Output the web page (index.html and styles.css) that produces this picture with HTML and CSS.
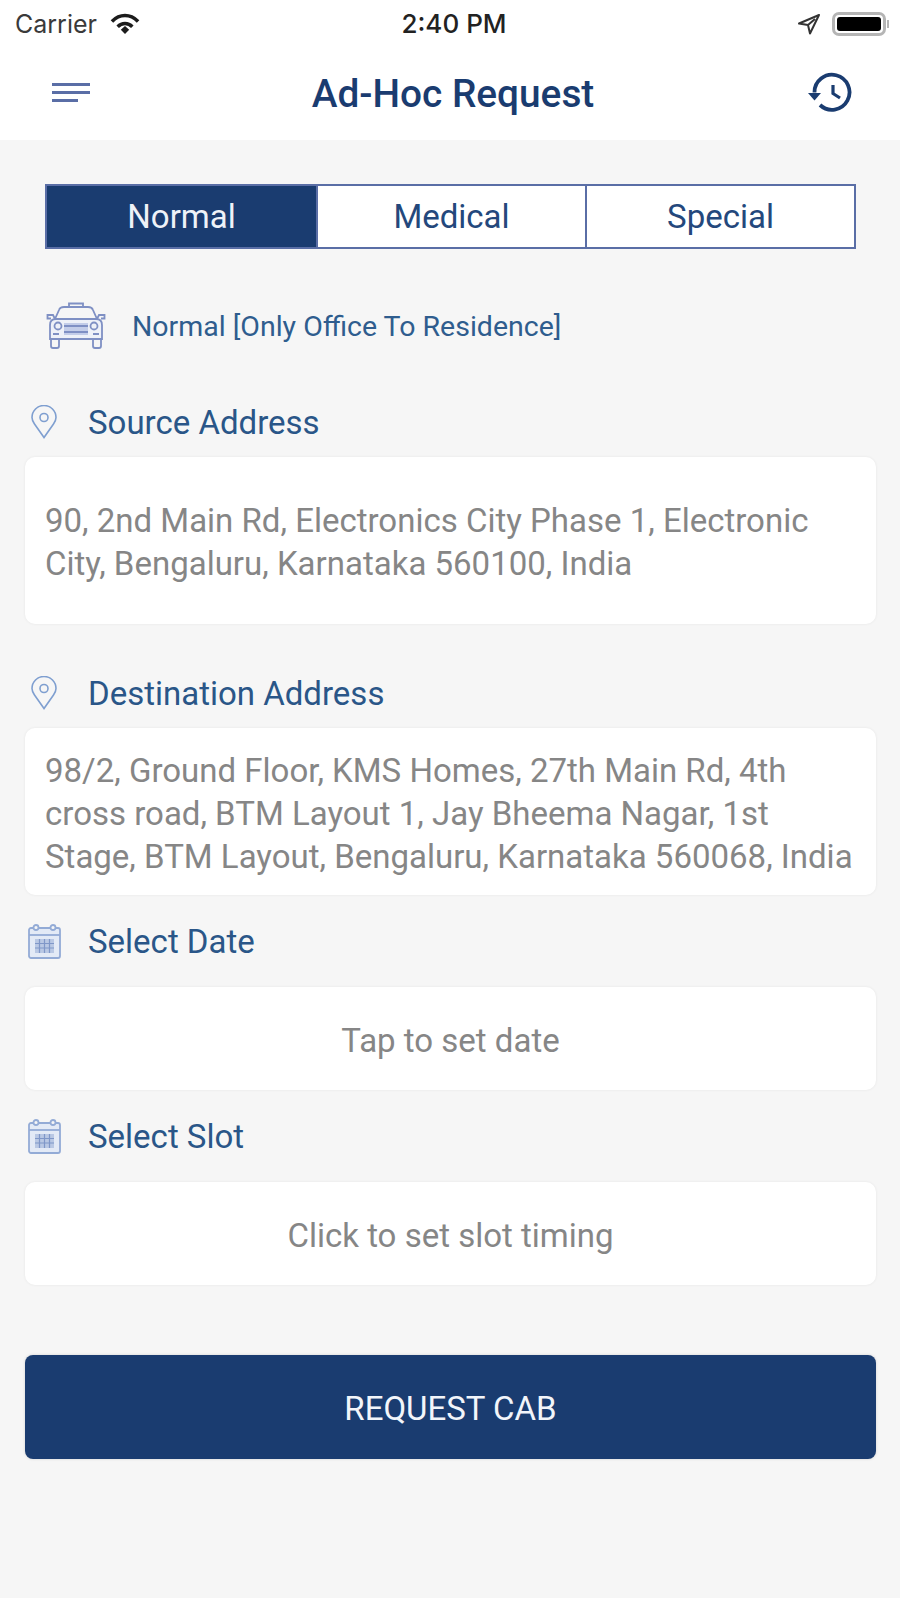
FILE: index.html
```html
<!DOCTYPE html>
<html lang="en">
<head>
<meta charset="utf-8">
<title>Ad-Hoc Request</title>
<link rel="stylesheet" href="styles.css">
</head>
<body>
<div class="app">
  <header class="top">
    <div class="status">
      <div class="status-left">
        <span>Carrier</span>
        <svg class="wifi" viewBox="0 0 30 22" width="32" height="23"><path d="M2.500 9 C10 1.500 20 1.500 27.500 9" fill="none" stroke="#1c1c1c" stroke-width="3.400"/><path d="M8 14 C12 10 18 10 22 14" fill="none" stroke="#1c1c1c" stroke-width="3.400"/><path d="M11 17 L15 13.500 L19 17 L15 21 Z" fill="#1c1c1c"/></svg>
      </div>
      <div class="status-time">2:40 PM</div>
      <div class="status-right">
        <svg viewBox="0 0 24 22" width="24" height="22"><path d="M22 2 L2 10.500 L11 12 L13 20.500 Z M18 6 L11 12" fill="none" stroke="#333" stroke-width="2" stroke-linejoin="round"/></svg>
        <div class="battery"><div class="battery-fill"></div></div>
        <div class="battery-tip"></div>
      </div>
    </div>
    <div class="nav">
      <svg class="menu" viewBox="0 0 38 22" width="38" height="22"><path d="M0 2.500H38M0 10.500H38M0 18.500H26" stroke="#5a6ea6" stroke-width="2.800" fill="none"/></svg>
      <h1 class="title">Ad-Hoc Request</h1>
      <svg class="history" viewBox="0 0 46 42" width="46" height="42"><path d="M6.500 20.500 A17.500 17.500 0 1 1 12 33" fill="none" stroke="#1a3c70" stroke-width="3.800"/><path d="M0 21 L13 21 L6.500 28.500 Z" fill="#1a3c70"/><path d="M25 13 V21.500 L32 26" fill="none" stroke="#1a3c70" stroke-width="3.200"/></svg>
    </div>
  </header>
  <main class="content">
    <div class="tabs">
      <div class="tab active">Normal</div>
      <div class="tab">Medical</div>
      <div class="tab">Special</div>
    </div>
    <div class="mode">
      <svg class="car" viewBox="0 0 60 48" width="60" height="48" fill="none" stroke="#7f90c4" stroke-width="1.800"><path d="M23 6V2.500H37V6"/><path d="M9 18 L13 9 Q14 6 18 6H42Q46 6 47 9L51 18"/><path d="M5 17.500H1.500V14H7L9 18M55 17.500H58.500V14H53L51 18"/><path d="M4 24 Q4 18 10 18H50Q56 18 56 24V38H4Z" fill="#eef1f8"/><path d="M5 38V45Q5 47 7 47H11Q13 47 13 45V38M47 38V45Q47 47 49 47H53Q55 47 55 45V38"/><circle cx="12" cy="25" r="3.500"/><circle cx="48" cy="25" r="3.500"/><rect x="18" y="22" width="24" height="12" fill="#c3cde9" stroke="none"/><path d="M18 25H42M18 31H42M7 33H13M47 33H53" stroke-width="2"/></svg>
      <span class="mode-text">Normal [Only Office To Residence]</span>
    </div>
    <section class="field field-source">
      <div class="label">
        <svg class="pin" viewBox="0 0 26 34" width="26" height="34" fill="none" stroke="#7f9fd0" stroke-width="1.600"><path d="M13 32.500 L3.500 19 Q1 15.500 1 12.500 A12 12 0 0 1 25 12.500 Q25 15.500 22.500 19 Z"/><circle cx="13" cy="12.500" r="4"/></svg>
        <span>Source Address</span>
      </div>
      <div class="card card-address">90, 2nd Main Rd, Electronics City Phase 1, Electronic City, Bengaluru, Karnataka 560100, India</div>
    </section>
    <section class="field field-dest">
      <div class="label">
        <svg class="pin" viewBox="0 0 26 34" width="26" height="34" fill="none" stroke="#7f9fd0" stroke-width="1.600"><path d="M13 32.500 L3.500 19 Q1 15.500 1 12.500 A12 12 0 0 1 25 12.500 Q25 15.500 22.500 19 Z"/><circle cx="13" cy="12.500" r="4"/></svg>
        <span>Destination Address</span>
      </div>
      <div class="card card-address">98/2, Ground Floor, KMS Homes, 27th Main Rd, 4th cross road, BTM Layout 1, Jay Bheema Nagar, 1st Stage, BTM Layout, Bengaluru, Karnataka 560068, India</div>
    </section>
    <section class="field field-date">
      <div class="label">
        <svg class="cal" viewBox="0 0 33 35" width="33" height="35" fill="none" stroke="#93abd6" stroke-width="1.800"><rect x="1" y="4" width="31" height="30" rx="2" fill="#e3eaf6"/><path d="M1 11H32"/><circle cx="8" cy="3.500" r="2.500" fill="#f6f6f6"/><circle cx="25" cy="3.500" r="2.500" fill="#f6f6f6"/><rect x="7" y="15" width="19" height="14" fill="#b9c8e4" stroke="none"/><path d="M7 19.500H26M7 24H26M11.500 15V29M16.500 15V29M21.500 15V29" stroke="#7f97c8" stroke-width="1.200"/></svg>
        <span>Select Date</span>
      </div>
      <div class="card card-action">Tap to set date</div>
    </section>
    <section class="field field-slot">
      <div class="label">
        <svg class="cal" viewBox="0 0 33 35" width="33" height="35" fill="none" stroke="#93abd6" stroke-width="1.800"><rect x="1" y="4" width="31" height="30" rx="2" fill="#e3eaf6"/><path d="M1 11H32"/><circle cx="8" cy="3.500" r="2.500" fill="#f6f6f6"/><circle cx="25" cy="3.500" r="2.500" fill="#f6f6f6"/><rect x="7" y="15" width="19" height="14" fill="#b9c8e4" stroke="none"/><path d="M7 19.500H26M7 24H26M11.500 15V29M16.500 15V29M21.500 15V29" stroke="#7f97c8" stroke-width="1.200"/></svg>
        <span>Select Slot</span>
      </div>
      <div class="card card-action">Click to set slot timing</div>
    </section>
    <button class="submit" type="button">REQUEST CAB</button>
  </main>
</div>
</body>
</html>
```

FILE: styles.css
```css
* { box-sizing: border-box; }
html, body { margin: 0; padding: 0; }
body { width: 900px; height: 1598px; background: #f6f6f6; font-family: Roboto, "Liberation Sans", sans-serif; overflow: hidden; }
.app { display: flex; flex-direction: column; height: 100%; }
.top { background: #fff; height: 140px; display: flex; flex-direction: column; flex: none; }
.status { height: 47px; padding: 0 11px 0 15px; display: grid; grid-template-columns: 1fr auto 1fr; align-items: center; color: #2b2b2b; font-family: Inter, "Liberation Sans", sans-serif; font-size: 25px; }
.status-left { display: flex; align-items: center; gap: 12px; color: #3a3a3a; }
.status-time { color: #222; font-size: 26px; font-weight: 500; padding-left: 4px; }
.status-right { display: flex; align-items: center; justify-content: flex-end; gap: 11px; }
.battery { width: 54px; height: 24px; border: 3px solid #b5b5b5; border-radius: 7px; padding: 2px; }
.battery-fill { width: 100%; height: 100%; background: #000; border-radius: 3px; }
.battery-tip { width: 2px; height: 8px; background: #b5b5b5; margin-left: -10px; }
.nav { flex: 1; display: grid; grid-template-columns: 1fr auto 1fr; align-items: center; padding: 0 46px 0 52px; margin-top: -2px; }
.title { margin: 0; padding: 2px 0 0; font-size: 38.800px; font-weight: 500; color: #1a3c70; text-align: center; }
.menu { justify-self: start; }
.history { justify-self: end; }
.content { padding: 44px 24px 0 25px; display: flex; flex-direction: column; }
.tabs { display: grid; grid-template-columns: repeat(3, 1fr); margin: 0 20px; height: 65px; border: 2px solid #5a6ea6; background: #fff; }
.tab { display: flex; align-items: center; justify-content: center; font-size: 33px; color: #24487c; }
.tab + .tab { border-left: 2px solid #5a6ea6; }
.tab.active { background: #1a3c70; color: #eef2f8; }
.mode { display: flex; align-items: center; gap: 26px; margin: 52px 0 0 21px; height: 48px; }
.mode-text { font-size: 28.500px; color: #2f5d8e; margin-top: 2px; }
.field { display: flex; flex-direction: column; }
.field-source { margin-top: 56px; }
.field-dest { margin-top: 52px; }
.field-date { margin-top: 29px; }
.field-slot { margin-top: 29px; }
.label { display: flex; align-items: center; gap: 31px; height: 34px; margin-left: 6px; font-size: 33px; color: #2a5688; }
.field-date .label, .field-slot .label { margin-left: 3px; gap: 27px; }
.card { background: #fff; border-radius: 10px; box-shadow: 0 0 3px rgba(0,0,0,.07); color: #868686; font-size: 33px; line-height: 43px; }
.card-address { height: 167px; margin-top: 18px; padding: 3px 20px 0; display: flex; align-items: center; }
.card-action { height: 103px; margin-top: 29px; padding-top: 3px; display: flex; align-items: center; justify-content: center; }
.submit { margin-top: 70px; height: 104px; padding: 3px 0 0; border: 0; border-radius: 8px; background: #1a3c70; color: #f2f5fa; font: 400 33px Roboto, "Liberation Sans", sans-serif; box-shadow: 0 0 3px rgba(0,0,0,.15); }
```
